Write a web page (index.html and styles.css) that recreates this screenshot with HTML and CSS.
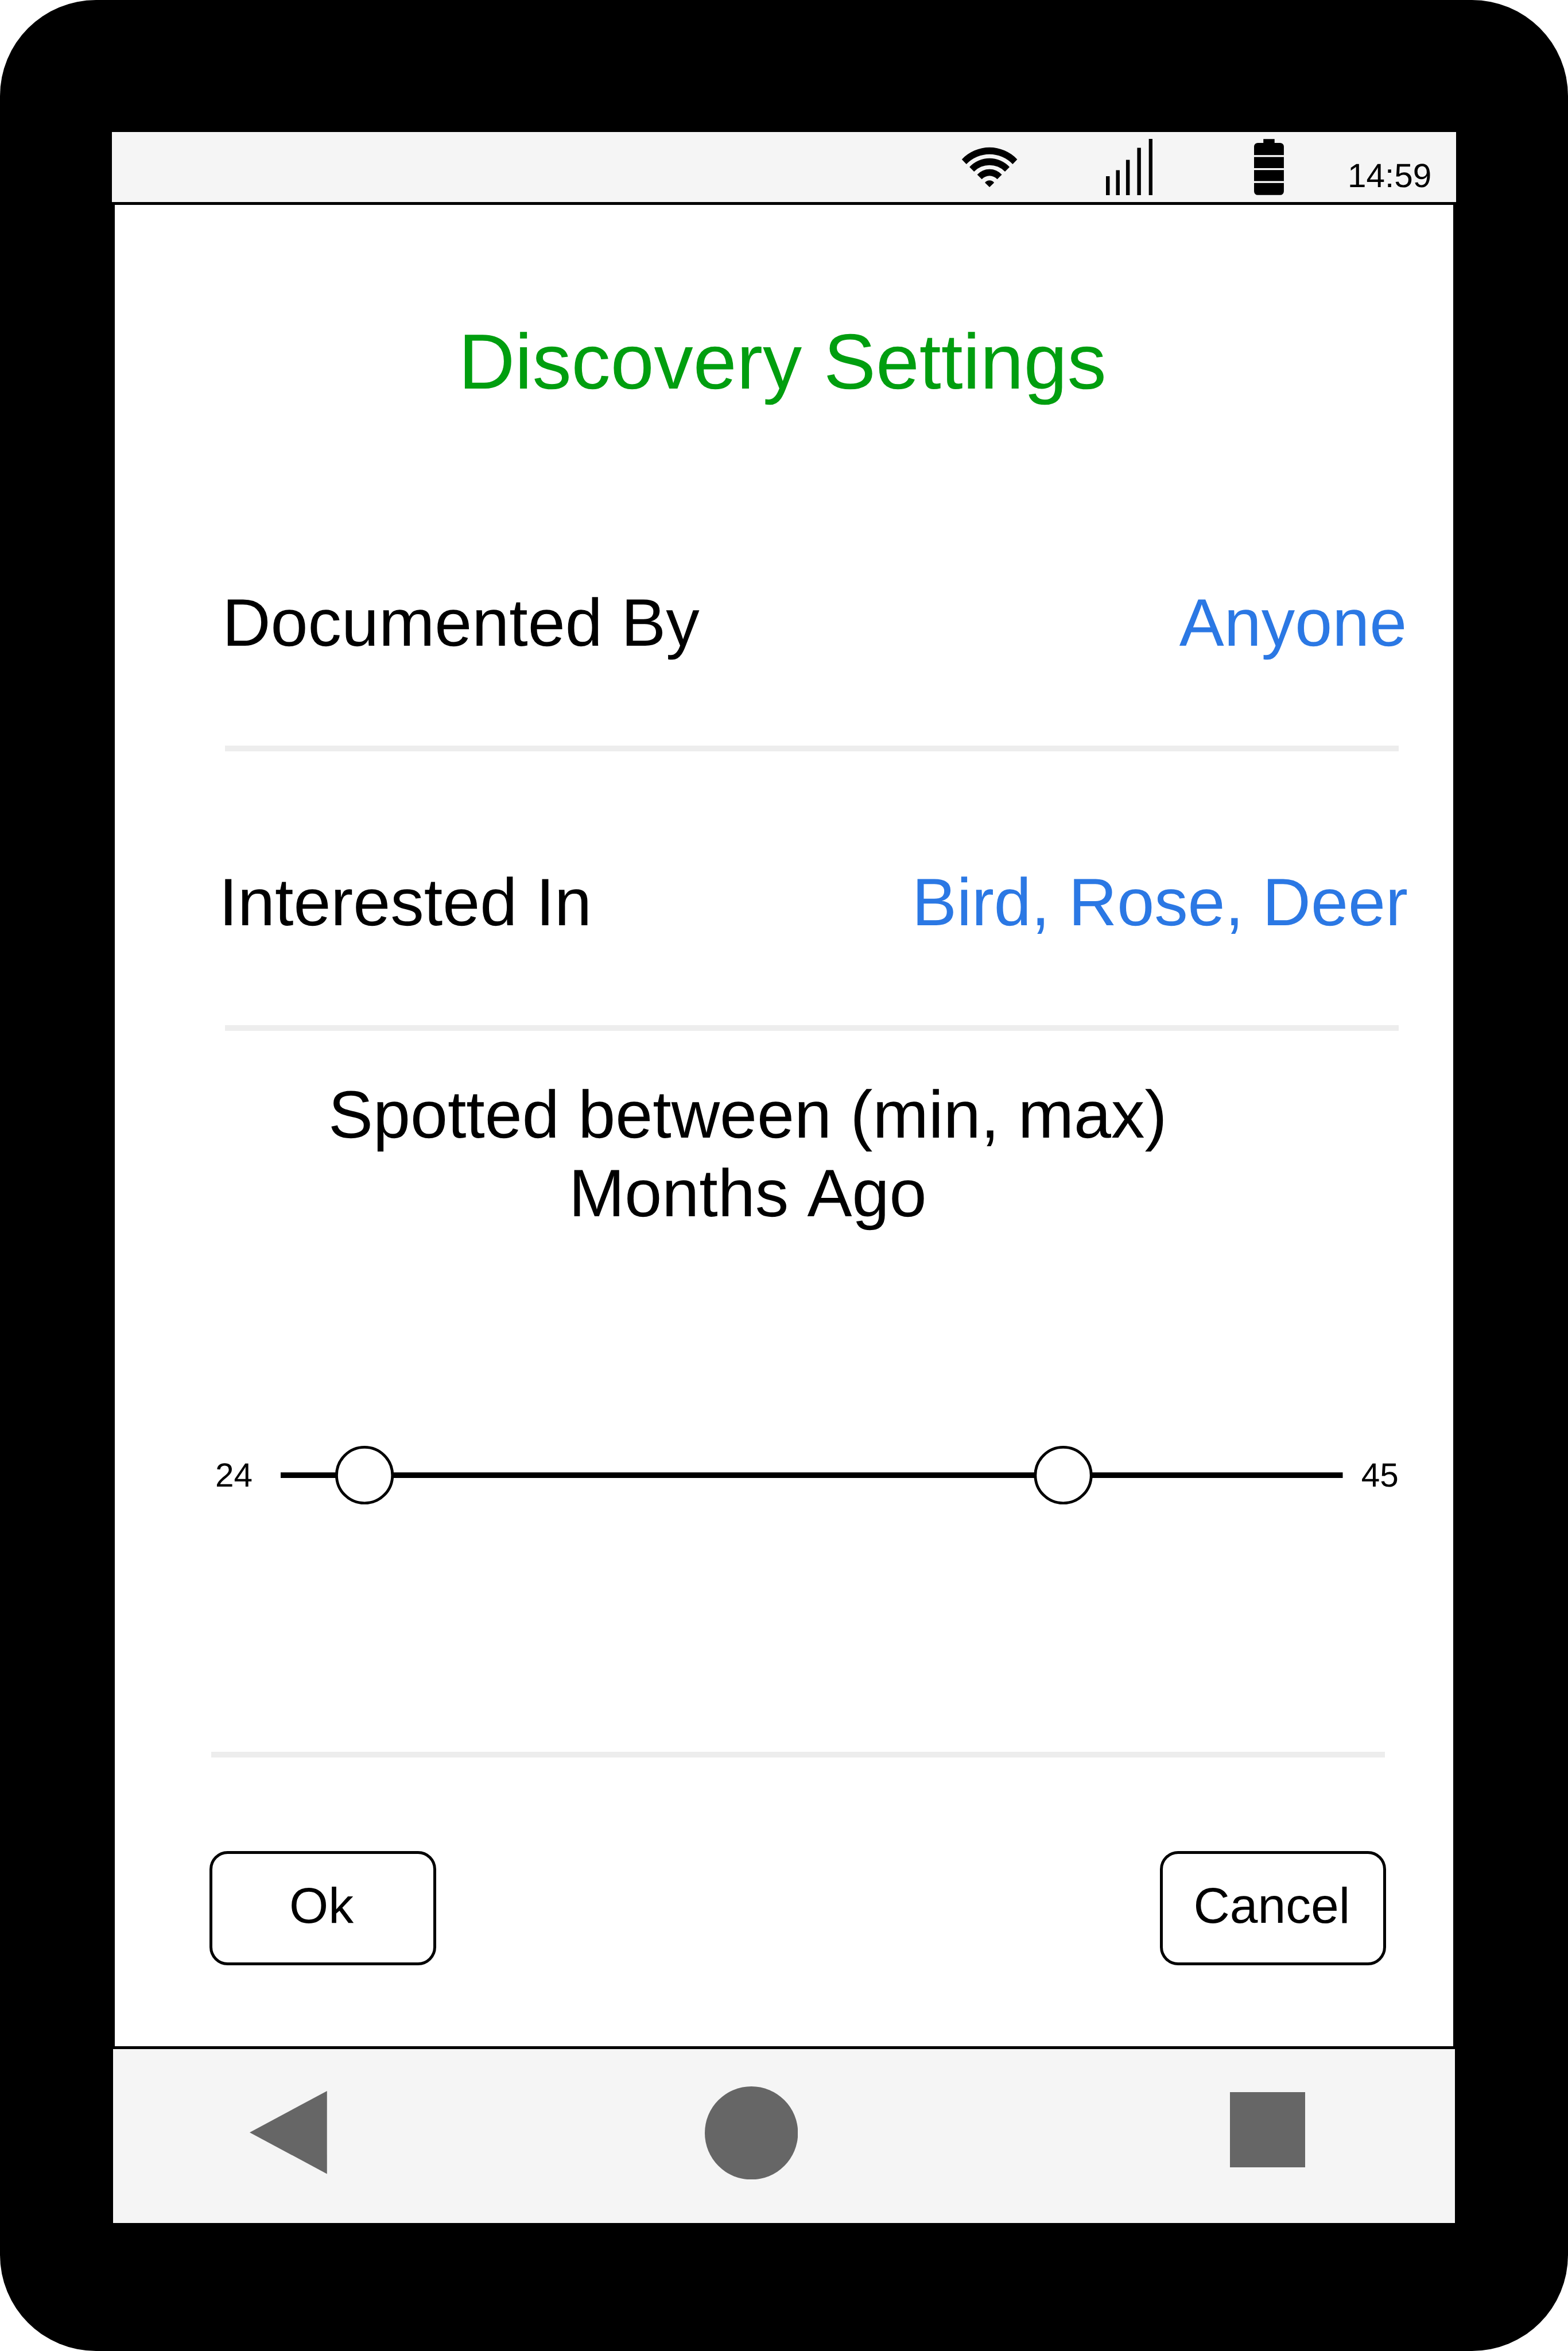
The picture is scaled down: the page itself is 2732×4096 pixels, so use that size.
FILE: index.html
```html
<!DOCTYPE html>
<html lang="en">
<head>
<meta charset="utf-8">
<title>Discovery Settings</title>
<link rel="stylesheet" href="styles.css">
</head>
<body>
<div class="phone">
  <header class="status">
    <svg class="wifi" viewBox="2063 315 121 87">
      <path d="M2064 341.7A81.7 81.7 0 0 1 2183 341.7L2173.2 352A68.6 68.6 0 0 0 2073.8 352Z"/>
      <path d="M2080.5 358A58.8 58.8 0 0 1 2166.5 358L2156.7 368A46.4 46.4 0 0 0 2090.3 368Z"/>
      <path d="M2097 374.3A36 36 0 0 1 2150 374.3L2140.1 384.3A22.6 22.6 0 0 0 2106.9 384.3Z"/>
      <path d="M2113.6 391.7A12.3 12.3 0 0 1 2133.4 391.7L2123.5 401.3Z"/>
    </svg>
    <svg class="signal" viewBox="2374 298 100 121">
      <path d="M2374 378h8v40.6h-8zM2395.5 365h8v53.6h-8zM2417 343h8v75.6h-8zM2441 317h8v101.6h-8zM2466 298h8v120.6h-8z"/>
    </svg>
    <svg class="battery" viewBox="2692 298 64 121">
      <path d="M2712 298.3h24v8.2h12a8 8 0 0 1 8 8v96a8 8 0 0 1-8 8h-48a8 8 0 0 1-8-8v-96a8 8 0 0 1 8-8h12z"/>
      <path class="gap" d="M2692 332.7h64v4h-64zM2692 360.7h64v4h-64zM2692 388.7h64v4h-64z"/>
    </svg>
    <span class="time">14:59</span>
  </header>

  <main class="content">
    <h1 class="title">Discovery Settings</h1>
    <div class="row row-documented">
      <span>Documented By</span>
      <span class="value">Anyone</span>
    </div>
    <div class="divider"></div>
    <div class="row row-interested">
      <span>Interested In</span>
      <span class="value">Bird, Rose, Deer</span>
    </div>
    <div class="divider"></div>
    <p class="range-label">Spotted between (min, max)<br>Months Ago</p>
    <div class="slider">
      <span class="bound">24</span>
      <svg class="track" viewBox="603 3103.5 2280 126">
        <path d="M603 3166.5H2883" stroke-width="12"/>
        <circle cx="783" cy="3166.5" r="60" stroke-width="6"/>
        <circle cx="2283" cy="3166.5" r="60" stroke-width="6"/>
      </svg>
      <span class="bound">45</span>
    </div>
    <div class="divider divider-last"></div>
    <div class="actions">
      <button class="button" type="button">Ok</button>
      <button class="button" type="button">Cancel</button>
    </div>
  </main>

  <nav class="nav">
    <svg class="back" viewBox="0 0 166 178"><path d="M0 89L166 0V178Z"/></svg>
    <svg class="home" viewBox="0 0 200 200"><circle cx="100" cy="100" r="100"/></svg>
    <svg class="recent" viewBox="0 0 162 162"><path d="M0 0h162v162H0z"/></svg>
  </nav>
</div>
</body>
</html>
```
FILE: styles.css
```css
/* 1rem is 100 drawing units; the device is 3366 x 5046 units. */
html {
  font-size: 81.165px;
}

*,
*::before,
*::after {
  box-sizing: border-box;
}

body {
  margin: 0;
  background: #fff;
  color: #000;
  font-family: Arial, "Liberation Sans", sans-serif;
  font-kerning: none;
  text-rendering: geometricPrecision;
}

svg {
  display: block;
  flex: none;
}

.phone {
  display: flex;
  flex-direction: column;
  width: 2732px;
  height: 4096px;
  padding-top: 2.837rem;
  overflow: hidden;
  background: #000;
  border-radius: 2.06rem;
}

/* Status bar */
.status {
  display: flex;
  align-items: flex-start;
  flex: none;
  width: 28.86rem;
  height: 1.498rem;
  margin-left: 2.4rem;
  padding-left: 18.24rem;
  background: #f5f5f5;
}

.wifi {
  width: 1.21rem;
  height: 0.87rem;
  margin-top: 0.313rem;
}

.signal {
  width: 1rem;
  height: 1.21rem;
  margin: 0.143rem 0 0 1.89rem;
}

.battery {
  width: 0.64rem;
  height: 1.21rem;
  margin: 0.143rem 0 0 2.18rem;
}

.battery .gap {
  fill: #fff;
}

.time {
  margin: 0.583rem 0 0 1.37rem;
  font-size: 0.72rem;
  line-height: 0.72rem;
}

/* Settings screen */
.content {
  flex: none;
  width: 28.74rem;
  height: 39.525rem;
  margin: 0.06rem 0 0 2.46rem;
  padding-top: 2.375rem;
  background: #fff;
}

.title {
  margin: 0;
  padding-right: 0.07rem;
  color: #009e0f;
  font-size: 1.68rem;
  font-weight: 400;
  line-height: 2rem;
  text-align: center;
}

.row {
  display: flex;
  justify-content: space-between;
  font-size: 1.44rem;
  line-height: 1.68rem;
}

.row-documented {
  margin-top: 3.763rem;
  padding: 0 1rem 0 2.31rem;
}

.row-interested {
  margin-top: 2.408rem;
  padding: 0 0.98rem 0 2.24rem;
}

.value {
  color: #2b78e4;
}

.divider {
  width: 25.2rem;
  height: 0.12rem;
  margin: 1.792rem 0 0 2.37rem;
  background: #ededed;
}

.range-label {
  width: 27.18rem;
  margin: 0.97rem 0 0;
  font-size: 1.44rem;
  line-height: 1.68rem;
  text-align: center;
}

.slider {
  display: flex;
  align-items: center;
  height: 1.26rem;
  margin-top: 4.58rem;
  padding-left: 2.16rem;
  font-size: 0.72rem;
  line-height: 0.72rem;
}

.bound {
  padding-top: 0.02rem;
}

.track {
  width: 22.8rem;
  height: 1.26rem;
  margin: 0 0.39rem 0 0.61rem;
  fill: #fff;
  stroke: #000;
}

.divider-last {
  margin: 5.31rem 0 0 2.07rem;
}

.actions {
  display: flex;
  justify-content: space-between;
  margin-top: 2.008rem;
  padding: 0 1.44rem 0 2.04rem;
}

.button {
  width: 4.86rem;
  height: 2.46rem;
  padding: 0 0.06rem 0.1rem 0;
  background: #fff;
  border: 5px solid #000;
  border-radius: 0.39rem;
  color: #000;
  font: inherit;
  font-size: 1.08rem;
  font-kerning: none;
  line-height: 1.26rem;
  text-align: center;
}

/* Navigation bar */
.nav {
  display: flex;
  align-items: flex-start;
  flex: none;
  width: 28.8rem;
  height: 3.727rem;
  margin: 0.07rem 0 0 2.43rem;
  padding-left: 2.933rem;
  background: #f5f5f5;
  fill: #666;
}

.back {
  width: 1.66rem;
  height: 1.78rem;
  margin-top: 0.897rem;
}

.home {
  width: 2rem;
  height: 2rem;
  margin: 0.79rem 0 0 8.105rem;
}

.recent {
  width: 1.62rem;
  height: 1.62rem;
  margin: 0.915rem 0 0 9.272rem;
}
```
